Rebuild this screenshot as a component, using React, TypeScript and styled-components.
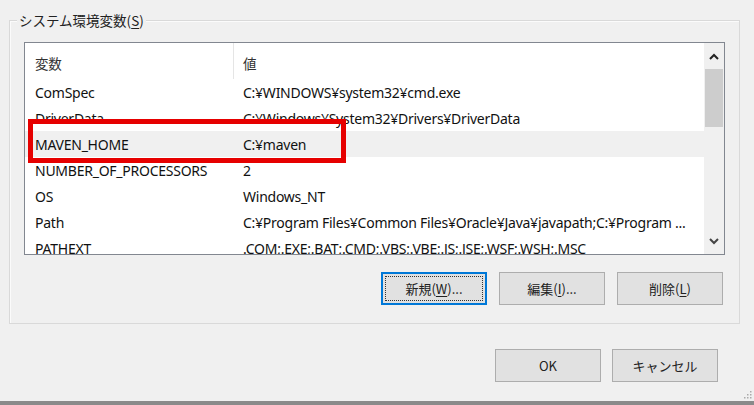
import React from "react";
import styled, { createGlobalStyle } from "styled-components";

const Global = createGlobalStyle`
  html, body { margin: 0; padding: 0; background: #f0f0f0; }
  body { font-family: "Noto Sans", "Noto Sans CJK JP", sans-serif; }
`;

const Window = styled.div`
  position: relative;
  width: 754px;
  height: 405px;
  box-sizing: border-box;
  background: #f0f0f0;
  padding-top: 20px;
  display: flex;
  flex-direction: column;
  border-bottom: 4px solid #8a8a8a;
  color: #111;
`;

const GroupBox = styled.section`
  margin: 0 14px 0 9px;
  padding: 0 14px 16px 7px;
  border: 1px solid #d9d9d9;
  box-shadow: inset 1px 1px 0 #fbfbfb;
  height: 304px;
  box-sizing: border-box;
  display: flex;
  flex-direction: column;
`;

const Legend = styled.div`
  align-self: flex-start;
  margin: -10px 0 0 0;
  height: 18px;
  font-family: "Noto Sans CJK JP", sans-serif;
  font-size: 13.5px;
  line-height: 18px;
  padding: 0 2px;
  background: #f0f0f0;
  color: #222;
`;

const U = styled.span`
  text-decoration: underline;
  text-underline-offset: 2px;
`;

const ListBox = styled.div`
  position: relative;
  margin: 13px 0 0 7px;
  height: 211px;
  border: 1px solid #828790;
  background: #fff;
  display: flex;
  overflow: hidden;
`;

const Rows = styled.div`
  flex: 1;
  display: flex;
  flex-direction: column;
  overflow: hidden;
`;

const Row = styled.div<{ $selected?: boolean; $header?: boolean }>`
  display: grid;
  grid-template-columns: 209px 1fr;
  height: ${(p) => (p.$header ? 36 : 26)}px;
  flex: none;
  align-items: center;
  background: ${(p) => (p.$selected ? "#f0f0f0" : "#fff")};
  font-size: 14px;
  white-space: nowrap;
`;

const Cell = styled.div<{ $first?: boolean; $header?: boolean }>`
  padding-left: ${(p) => (p.$first ? 10 : 9)}px;
  height: 100%;
  display: flex;
  align-items: ${(p) => (p.$header ? "flex-start" : "center")};
  padding-top: ${(p) => (p.$header ? 10 : 0)}px;
  box-sizing: border-box;
  overflow: hidden;
  border-right: ${(p) => (p.$header && p.$first ? "1px solid #e5e5e5" : "none")};
  font-family: ${(p) => (p.$header ? '"Noto Sans CJK JP", sans-serif' : '"Noto Sans", "Noto Sans CJK JP", sans-serif')};
  font-size: ${(p) => (p.$header ? 13.5 : 14)}px;
  color: ${(p) => (p.$header ? "#333" : "#111")};
  letter-spacing: -0.25px;
`;

const ScrollBar = styled.div`
  width: 20px;
  flex: none;
  background: #f0f0f0;
  display: flex;
  flex-direction: column;
`;

const Arrow = styled.div`
  height: 26px;
  display: flex;
  align-items: center;
  justify-content: center;
`;

const Thumb = styled.div`
  height: 58px;
  margin: 0 1px;
  background: #cdcdcd;
`;

const Track = styled.div`
  flex: 1;
`;

const Highlight = styled.div`
  position: absolute;
  left: 3px;
  top: 76px;
  width: 308px;
  height: 34px;
  border: 5px solid #e60000;
  pointer-events: none;
`;

const ButtonRow = styled.div<{ $gap: number }>`
  display: flex;
  justify-content: flex-end;
  gap: ${(p) => p.$gap}px;
`;

const GroupButtons = styled(ButtonRow)`
  margin-top: 17px;
  padding-right: 2px;
`;

const DialogButtons = styled(ButtonRow)`
  margin-top: 25px;
  padding-right: 36px;
`;

const Button = styled.button<{ $focused?: boolean }>`
  width: 106px;
  height: 33px;
  box-sizing: border-box;
  background: #e1e1e1;
  border: 1px solid ${(p) => (p.$focused ? "#0078d7" : "#adadad")};
  box-shadow: ${(p) => (p.$focused ? "inset 0 0 0 1px #0078d7" : "none")};
  font-family: "Noto Sans CJK JP", "Noto Sans", sans-serif;
  font-size: 13px;
  color: #222;
  padding: 0;
  display: flex;
  align-items: center;
  justify-content: center;
  position: relative;
`;

const FocusRect = styled.span`
  position: absolute;
  inset: 3px;
  border: 1px dotted #333;
  pointer-events: none;
`;

const Grip = styled.svg`
  position: absolute;
  right: 2px;
  bottom: 2px;
`;

const rows: [string, string][] = [
  ["ComSpec", "C:¥WINDOWS¥system32¥cmd.exe"],
  ["DriverData", "C:¥Windows¥System32¥Drivers¥DriverData"],
  ["MAVEN_HOME", "C:¥maven"],
  ["NUMBER_OF_PROCESSORS", "2"],
  ["OS", "Windows_NT"],
  ["Path", "C:¥Program Files¥Common Files¥Oracle¥Java¥javapath;C:¥Program ..."],
  ["PATHEXT", ".COM;.EXE;.BAT;.CMD;.VBS;.VBE;.JS;.JSE;.WSF;.WSH;.MSC"],
];

export default function App() {
  return (
    <>
      <Global />
      <Window>
        <GroupBox>
          <Legend>
            システム環境変数(<U>S</U>)
          </Legend>
          <ListBox>
            <Rows>
              <Row $header>
                <Cell $first $header>変数</Cell>
                <Cell $header>値</Cell>
              </Row>
              {rows.map(([k, v]) => (
                <Row key={k} $selected={k === "MAVEN_HOME"}>
                  <Cell $first>{k}</Cell>
                  <Cell>{v}</Cell>
                </Row>
              ))}
            </Rows>
            <ScrollBar>
              <Arrow>
                <svg width="10" height="7" viewBox="0 0 10 7">
                  <path d="M1 6 L5 2 L9 6" fill="none" stroke="#222" strokeWidth="2" />
                </svg>
              </Arrow>
              <Thumb />
              <Track />
              <Arrow>
                <svg width="10" height="7" viewBox="0 0 10 7">
                  <path d="M1 1 L5 5 L9 1" fill="none" stroke="#444" strokeWidth="2" />
                </svg>
              </Arrow>
            </ScrollBar>
            <Highlight />
          </ListBox>
          <GroupButtons $gap={12}>
            <Button $focused>
              新規(<U>W</U>)...
              <FocusRect />
            </Button>
            <Button>
              編集(<U>I</U>)...
            </Button>
            <Button>
              削除(<U>L</U>)
            </Button>
          </GroupButtons>
        </GroupBox>
        <DialogButtons $gap={11}>
          <Button>OK</Button>
          <Button>キャンセル</Button>
        </DialogButtons>
        <Grip width="8" height="8" viewBox="0 0 8 8">
          <rect x="6" y="0" width="1.5" height="1.5" fill="#aaa" />
          <rect x="3" y="3" width="1.5" height="1.5" fill="#aaa" />
          <rect x="6" y="3" width="1.5" height="1.5" fill="#aaa" />
          <rect x="0" y="6" width="1.5" height="1.5" fill="#aaa" />
          <rect x="3" y="6" width="1.5" height="1.5" fill="#aaa" />
          <rect x="6" y="6" width="1.5" height="1.5" fill="#aaa" />
        </Grip>
      </Window>
    </>
  );
}
